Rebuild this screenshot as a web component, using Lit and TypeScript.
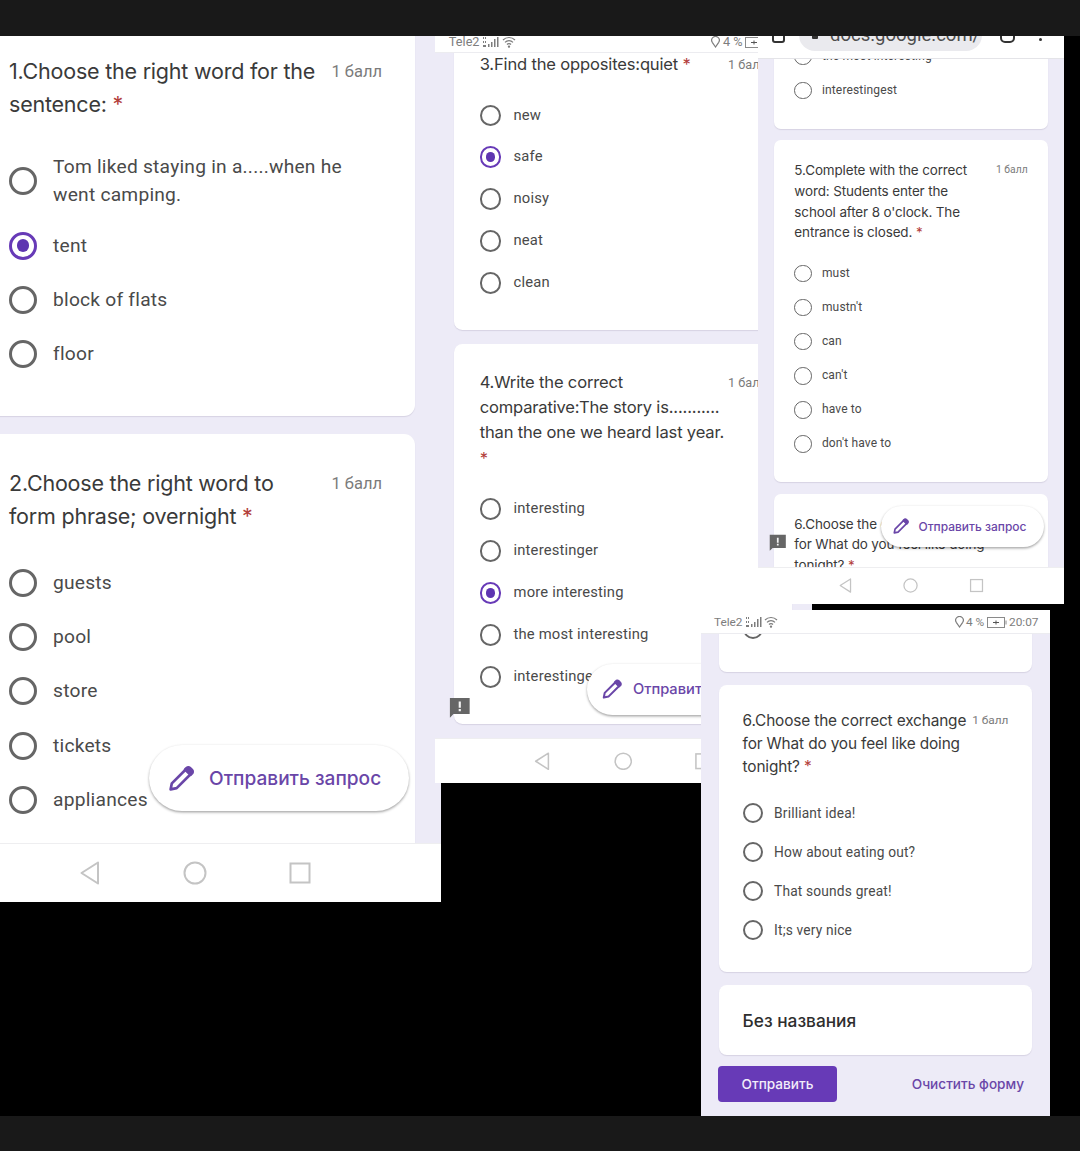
import { LitElement, html, css, nothing } from "lit";
import { customElement } from "lit/decorators.js";

interface Q { lines: string[]; options: string[]; checked?: number; points?: boolean }

const Q1: Q = { lines: ["1.Choose the right word for the", "sentence:"], options: ["Tom liked staying in a.....when he went camping.", "tent", "block of flats", "floor"], checked: 1 };
const Q2: Q = { lines: ["2.Choose the right word to", "form phrase; overnight"], options: ["guests", "pool", "store", "tickets", "appliances"] };
const Q3: Q = { lines: ["3.Find the opposites:quiet"], options: ["new", "safe", "noisy", "neat", "clean"], checked: 1 };
const Q4: Q = { lines: ["4.Write the correct", "comparative:The story is...........", "than the one we heard last year.", ""], options: ["interesting", "interestinger", "more interesting", "the most interesting", "interestingest"], checked: 2 };
const Q5: Q = { lines: ["5.Complete with the correct", "word: Students enter the", "school after 8 o'clock. The", "entrance is closed."], options: ["must", "mustn't", "can", "can't", "have to", "don't have to"] };
const Q6: Q = { lines: ["6.Choose the correct exchange", "for What do you feel like doing", "tonight?"], options: ["Brilliant idea!", "How about eating out?", "That sounds great!", "It;s very nice"] };

@customElement("app-root")
export class AppRoot extends LitElement {
  static styles = css`
    :host { display: block; width: 1080px; height: 1151px; background: #000; font-family: Roboto, "Liberation Sans", sans-serif; }
    .page { display: grid; grid-template-rows: 36px 1080px 35px; height: 1151px; }
    .bar { background: #191919; position: relative; z-index: 5; }
    .canvas { position: relative; overflow: hidden; background: #000; }

    .win { position: absolute; width: calc(489px * var(--s)); display: flex; flex-direction: column; overflow: hidden; background: #edebf7; }
    .w1 { --s: 1; left: -49px; top: 0; width: 490px; height: 866px; z-index: 1; }
    .w2 { --s: 0.77; left: 435px; top: 0; height: 747px; z-index: 2; }
    .w3 { --s: 0.627; left: 758px; top: 0; width: 306px; height: 568px; z-index: 3; }
    .w4 { --s: 0.717; left: 701px; top: 574px; width: 349px; height: 506px; z-index: 4; }

    .scroll { flex: 1; min-height: 0; position: relative; overflow: hidden; }
    .w1 .inner { margin-top: -15px; }
    .w2 .inner { margin-top: -26px; }
    .w3 .inner { margin-top: -18.5px; }
    .w4 .inner { margin-top: -24px; }

    .card {
      background: #fff; border-radius: calc(11px * var(--s));
      margin: 0 calc(25px * var(--s)) calc(18px * var(--s));
      padding: calc(33.5px * var(--s)) calc(33px * var(--s)) calc(34px * var(--s));
      box-shadow: 0 1px 1px rgba(60, 50, 90, 0.13);
    }
    .w1 .card { margin-right: 26px; }
    .card.tail { padding-top: 0; border-radius: 0 0 calc(11px * var(--s)) calc(11px * var(--s)); }
    .head { display: flex; align-items: flex-start; margin-bottom: calc(22.3px * var(--s)); }
    .w3 .card:not(.tail) { padding-top: calc(32px * var(--s)); }
    .w3 .head { margin-bottom: calc(21.3px * var(--s)); }
    .w4 .head { margin-bottom: calc(18.5px * var(--s) + 2px); }
    .w4 .card:not(.tail) { padding-bottom: calc(32px * var(--s)); }
    .title {
      flex: 1; min-width: 0; white-space: nowrap; color: #3a3a3a;
      font-family: Inter, "Noto Sans", sans-serif; font-size: calc(21.5px * var(--s)); line-height: calc(33px * var(--s));
      letter-spacing: -0.01em;
    }
    .w4 .title { line-height: 23px; }
    .star { color: #b3403c; }
    .points { color: #7b7b7b; font-size: calc(16.5px * var(--s)); line-height: calc(33px * var(--s)); white-space: nowrap; }

    .row { display: flex; align-items: center; gap: calc(16px * var(--s)); min-height: calc(54.4px * var(--s)); padding: calc(9.8px * var(--s)) 0; box-sizing: border-box; }
    .radio { flex: none; box-sizing: border-box; width: calc(28px * var(--s)); height: calc(28px * var(--s)); border-radius: 50%; border: calc(3px * var(--s)) solid #666; display: flex; align-items: center; justify-content: center; }
    .radio.on { border-color: #673ab7; }
    .radio.on::after { content: ""; width: 56%; height: 56%; border-radius: 50%; background: #5e35b1; }
    .label { color: #4a4a4a; font-size: calc(19.2px * var(--s)); line-height: calc(28px * var(--s)); letter-spacing: 0.012em; max-width: calc(310px * var(--s)); }

    .nav { flex: none; height: calc(59px * var(--s)); background: #fff; display: flex; align-items: center; gap: calc(81px * var(--s)); padding-left: calc(127px * var(--s)); box-sizing: border-box; border-top: 1px solid #eeeef0; position: relative; z-index: 2; }
    .nav svg { width: calc(24px * var(--s)); height: calc(24px * var(--s)); fill: none; stroke: #c4c4c4; stroke-width: 2; }

    .fab {
      position: absolute; right: calc(32px * var(--s)); bottom: calc(32px * var(--s));
      width: calc(260px * var(--s)); height: calc(66px * var(--s)); box-sizing: border-box;
      border-radius: calc(33px * var(--s)); background: #fff; box-shadow: 0 1.5px 2.5px rgba(0, 0, 0, 0.32), 0 0 3px rgba(0, 0, 0, 0.05);
      display: flex; align-items: center; gap: calc(13px * var(--s)); padding-left: calc(18px * var(--s));
      color: #6a46a8; font-family: Inter, "Noto Sans", sans-serif; font-weight: 500; font-size: calc(19.1px * var(--s)); white-space: nowrap;
    }
    .w2 .fab { bottom: 23px; }
    .fab svg { flex: none; width: calc(29px * var(--s)); height: calc(29px * var(--s)); }
    .report { position: absolute; left: calc(18px * var(--s)); bottom: calc(25px * var(--s)); width: calc(28px * var(--s)); height: calc(28px * var(--s)); }

    .status { flex: none; position: relative; z-index: 2; background: #fff; display: flex; align-items: flex-end; justify-content: space-between; box-sizing: border-box; padding: 0 calc(16px * var(--s)) 3px calc(18px * var(--s)); color: #7d7d7d; font-size: calc(16.5px * var(--s)); line-height: 16px; white-space: nowrap; box-shadow: 0 1px 0 #ececf0; }
    .w2 .status { height: 16px; padding-bottom: 2px; }
    .w4 .status { height: 23px; }
    .group { display: flex; align-items: center; gap: calc(2px * var(--s) + 1px); }
    .group svg { display: block; }

    .toolbar { flex: none; height: 22px; position: relative; z-index: 2; background: #fff; box-shadow: 0 1px 0 #e4e4e8; }
    .tools { margin-top: -22px; height: 44px; display: flex; align-items: center; padding-left: 14px; color: #4d4d4d; }
    .pill { width: 183px; height: 32px; margin-left: 14px; background: #eaeaee; border-radius: 16px; box-sizing: border-box; padding-left: 13px; display: flex; align-items: center; gap: 12px; font-size: 18.5px; margin-top: -2px; }
    .lock { width: 6px; height: 7px; background: #333; border-radius: 1px; }
    .tools .tab { width: 13px; height: 13px; border: 2px solid #333; border-radius: 3px; box-sizing: border-box; }
    .tools .tab.b { width: 15px; margin-left: 18px; border-radius: 5px; }
    .dot { width: 3px; height: 3px; border-radius: 50%; background: #333; margin-left: 24px; box-shadow: 0 -6px 0 #333, 0 -12px 0 #333; margin-top: 6px; }

    .w4 .card.plain { padding: 0 calc(33px * var(--s)); height: 70px; box-sizing: border-box; display: flex; align-items: center; font-family: Inter, "Noto Sans", sans-serif; font-weight: 500; font-size: 17.3px; color: #2e2e2e; margin-bottom: 11px; }
    .actions { display: flex; align-items: center; justify-content: space-between; margin: 0 26px 0 17px; font-family: Inter, "Noto Sans", sans-serif; font-weight: 500; font-size: 13.6px; }
    .send { width: 119px; height: 36px; background: #673ab7; color: #f2edfa; border-radius: 4px; display: flex; align-items: center; justify-content: center; }
    .clear { color: #6a46a8; }
  `;

  private question(q: Q) {
    return html`<div class="card">
      <div class="head">
        <div class="title">${q.lines.map((l, i) => html`${i ? html`<br />` : nothing}${l}`)}${q.lines[q.lines.length - 1] ? " " : ""}<span class="star">*</span></div>
        <div class="points">1 балл</div>
      </div>
      ${this.options(q)}
    </div>`;
  }

  private options(q: Q) {
    return q.options.map(
      (o, i) => html`<div class="row"><span class="radio ${q.checked === i ? "on" : ""}"></span><span class="label">${o}</span></div>`
    );
  }

  private tail(options: string[]) {
    return html`<div class="card tail">${this.options({ lines: [], options })}</div>`;
  }

  private nav() {
    return html`<div class="nav">
      <svg viewBox="0 0 24 24"><path d="M20 1.5 3.5 12 20 22.5Z" stroke-linejoin="round" /></svg>
      <svg viewBox="0 0 24 24"><circle cx="12" cy="12" r="10.5" /></svg>
      <svg viewBox="0 0 24 24"><rect x="2.5" y="2.5" width="19" height="19" /></svg>
    </div>`;
  }

  private fab() {
    return html`<div class="fab">
      <svg viewBox="0 0 24 24" fill="none" stroke="#6a46a8" stroke-width="2.2" stroke-linejoin="round">
        <path d="M3 21l1-5L15.5 4.5l4 4L8 20Z" />
        <path d="M16 3.5a2 2 0 0 1 3-.2l1.7 1.7a2 2 0 0 1-.2 3l-1 1-4.5-4.5Z" fill="#6a46a8" />
      </svg>
      <span>Отправить запрос</span>
    </div>`;
  }

  private report() {
    return html`<svg class="report" viewBox="0 0 24 24">
      <path d="M1 1h22v18H5l-4 4Z" fill="#666" />
      <path d="M10.8 5h2.4v7h-2.4ZM10.8 13.5h2.4v2.4h-2.4Z" fill="#f4f4f4" />
    </svg>`;
  }

  private status() {
    return html`<div class="status">
      <div class="group">
        <span>Tele2</span>
        <svg width="17" height="12" viewBox="0 0 17 12" fill="#7d7d7d">
          <path d="M1 1h1v2H1ZM3 1h1v2H3ZM1 5h1v2H1ZM3 5h1v2H3ZM1 9h3v2H1ZM6 8h1.5v3H6ZM9 6h1.5v5H9ZM12 3h1.5v8H12ZM15 1h1.5v10H15Z" />
        </svg>
        <svg width="14" height="12" viewBox="0 0 14 12" fill="none" stroke="#7d7d7d" stroke-width="1.2">
          <path d="M1 4a8.5 8.5 0 0 1 12 0M3 6.3a5.5 5.5 0 0 1 8 0M5 8.5a2.6 2.6 0 0 1 4 0" /><circle cx="7" cy="10.6" r=".6" fill="#7d7d7d" />
        </svg>
      </div>
      <div class="group">
        <svg width="9" height="12" viewBox="0 0 9 12" fill="none" stroke="#7d7d7d" stroke-width="1.2"><path d="M4.5 11 1.3 6.3a3.8 3.8 0 1 1 6.4 0Z" /></svg>
        <span>4 %</span>
        <svg width="20" height="11" viewBox="0 0 20 11" fill="none" stroke="#8a8a8a"><rect x=".5" y=".5" width="17" height="10" /><path d="M19 3.5v4" /><path d="M6 5.5h6M9 3.5v4" stroke="#555" /></svg>
        <span>20:07</span>
      </div>
    </div>`;
  }

  render() {
    return html`<div class="page">
      <div class="bar"></div>
      <div class="canvas">
        <section class="win w1">
          <div class="scroll">
            <div class="inner">${this.question(Q1)}${this.question(Q2)}</div>
            ${this.fab()}
          </div>
          ${this.nav()}
        </section>

        <section class="win w2">
          ${this.status()}
          <div class="scroll">
            <div class="inner">${this.question(Q3)}${this.question(Q4)}<div class="card"></div></div>
            ${this.report()}${this.fab()}
          </div>
          ${this.nav()}
        </section>

        <section class="win w3">
          <div class="toolbar">
            <div class="tools">
              <span class="tab"></span>
              <span class="pill"><span class="lock"></span><span>docs.google.com/</span></span>
              <span class="tab b"></span>
              <span class="dot"></span>
            </div>
          </div>
          <div class="scroll">
            <div class="inner">${this.tail(["the most interesting", "interestingest"])}${this.question(Q5)}${this.question(Q6)}</div>
            ${this.report()}${this.fab()}
          </div>
          ${this.nav()}
        </section>

        <section class="win w4">
          ${this.status()}
          <div class="scroll">
            <div class="inner">
              ${this.tail([""])}${this.question(Q6)}
              <div class="card plain">Без названия</div>
              <div class="actions"><div class="send">Отправить</div><div class="clear">Очистить форму</div></div>
            </div>
          </div>
        </section>
      </div>
      <div class="bar"></div>
    </div>`;
  }
}
